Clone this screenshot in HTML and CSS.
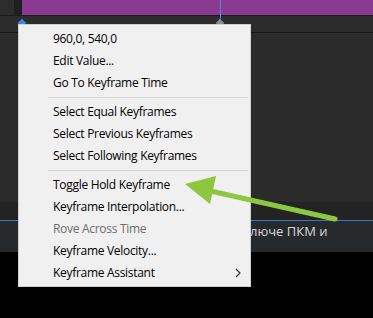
FILE: index.html
```html
<!DOCTYPE html>
<html lang="en">
<head>
<meta charset="UTF-8" />
<title>Keyframe Menu</title>
<link rel="stylesheet" href="styles.css">
</head>
<body>
<div class="stage">
  <div class="track-row">
    <div class="gutter"></div>
    <div class="gutter-dark"></div>
    <div class="clip"></div>
  </div>
  <div class="ruler-row"></div>
  <div class="panel-row"></div>
  <div class="lower-row"></div>
  <div class="hint-row">
    <span class="hint-text">люче ПКМ и</span>
  </div>
  <div class="black-row"></div>

  <div class="playhead"></div>
  <div class="key key-blue"></div>
  <div class="key key-grey"></div>

  <ul class="menu">
    <li>960,0, 540,0</li>
    <li>Edit Value...</li>
    <li>Go To Keyframe Time</li>
    <li class="sep"></li>
    <li>Select Equal Keyframes</li>
    <li>Select Previous Keyframes</li>
    <li>Select Following Keyframes</li>
    <li class="sep"></li>
    <li>Toggle Hold Keyframe</li>
    <li>Keyframe Interpolation...</li>
    <li class="disabled">Rove Across Time</li>
    <li>Keyframe Velocity...</li>
    <li class="sub">Keyframe Assistant
      <svg class="chev" viewBox="0 0 6 10" width="6" height="10"><path d="M1 1 L5 5 L1 9" fill="none" stroke="#333" stroke-width="1.2"/></svg>
    </li>
  </ul>

  <svg class="arrow" viewBox="0 0 373 318" width="373" height="318" xmlns="http://www.w3.org/2000/svg">
    <line x1="206" y1="190" x2="335" y2="219" stroke="#8dc63f" stroke-width="5" stroke-linecap="round" />
    <path d="M185 184 L216 176 L210 204 Z" fill="#8dc63f" />
  </svg>
</div>
</body>
</html>
```

FILE: styles.css
```css
body {
  margin: 0;
  background: #000;
  font-family: "Open Sans", "Noto Sans", sans-serif;
}
.stage {
  position: relative;
  width: 373px;
  height: 318px;
  overflow: hidden;
  display: flex;
  flex-direction: column;
}
.track-row {
  display: flex;
  height: 15px;
  border-bottom: 1px solid #1a1a1a;
}
.gutter {
  width: 14px;
  background: #2d2d2d;
}
.gutter-dark {
  width: 8px;
  background: #1f1f1f;
}
.clip {
  flex: 1;
  background: #8a3a90;
}
.ruler-row {
  height: 16px;
  background: #2c2c2c;
  border-bottom: 1px solid #161616;
}
.panel-row {
  height: 169px;
  background: #2b2b2b;
}
.lower-row {
  height: 18px;
  background: #232323;
  border-bottom: 1px solid #3b78c8;
}
.hint-row {
  height: 31px;
  background: #272a2d;
  padding-left: 250px;
}
.hint-text {
  display: block;
  margin-top: 1px;
  color: #d6d6d6;
  font-size: 13px;
  line-height: 18px;
}
.black-row {
  flex: 1;
  background: #000;
}
.playhead {
  position: absolute;
  left: 220px;
  top: 0;
  width: 1px;
  height: 22px;
  background: #4a8ee0;
}
.key {
  position: absolute;
  width: 6px;
  height: 6px;
  transform: rotate(45deg);
}
.key-blue {
  left: 19px;
  top: 20px;
  background: #3d86e0;
}
.key-grey {
  left: 217px;
  top: 20px;
  background: #8a8a8a;
}
.menu {
  position: absolute;
  left: 18px;
  top: 24px;
  width: 231px;
  margin: 0;
  padding: 3px 0 2px;
  list-style: none;
  background: #f0f0f0;
  border: 1px solid #d0d0d0;
  font-size: 12px;
  letter-spacing: -0.3px;
  color: #000;
}
.menu li {
  position: relative;
  height: 22px;
  line-height: 22px;
  padding-left: 34px;
  white-space: nowrap;
}
.menu li.sep {
  height: 7px;
  padding: 0;
  margin-left: 29px;
  margin-right: 2px;
  box-sizing: border-box;
  border-bottom: 1px solid #d7d7d7;
  transform: translateY(-3px);
}
.menu li.disabled {
  color: #6d6d6d;
}
.chev {
  position: absolute;
  right: 9px;
  top: 6px;
}
.arrow {
  position: absolute;
  left: 0;
  top: 0;
  pointer-events: none;
}
```
